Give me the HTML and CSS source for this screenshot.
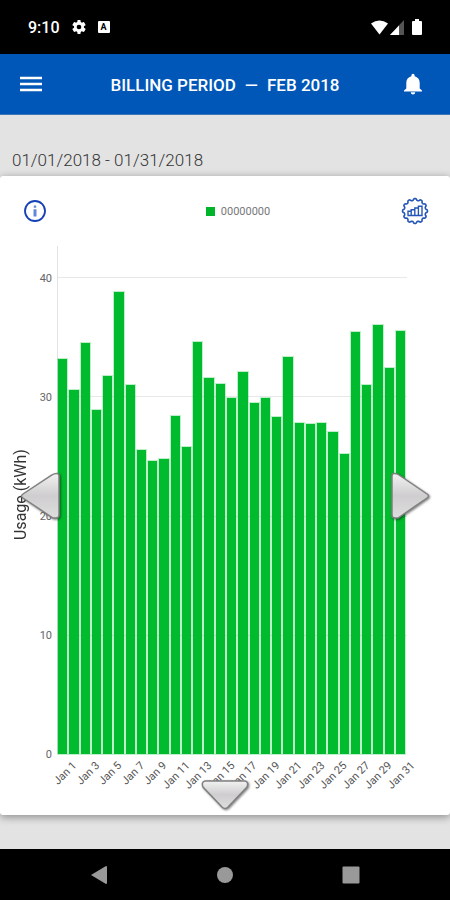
FILE: index.html
```
<!DOCTYPE html>
<html lang="en">
<head>
  <meta charset="UTF-8">
  <meta name="viewport" content="width=device-width, initial-scale=1">
  <title>Billing Period</title>
  <link rel="stylesheet" href="styles.css">
</head>
<body>

  <div class="status-bar">
    <span class="time">9:10</span>
    <svg width="16" height="16" viewBox="0 0 24 24"><path fill="#fff" d="M19.4 13a7.500 7.500 0 0 0 0-2l2.300-1.700a.5.5 0 0 0 .1-.7l-2.200-3.800a.5.5 0 0 0-.6-.2l-2.700 1a8 8 0 0 0-1.700-1L14.200 1.800a.5.5 0 0 0-.5-.4h-3.400a.5.5 0 0 0-.5.400L9.400 4.600a8 8 0 0 0-1.700 1l-2.700-1a.5.5 0 0 0-.6.2L2.200 8.600a.5.500 0 0 0 .1.700L4.600 11a7.500 7.500 0 0 0 0 2l-2.300 1.700a.5.5 0 0 0-.1.700l2.200 3.800c.1.200.4.300.6.200l2.700-1a8 8 0 0 0 1.700 1l.4 2.800c0 .2.2.4.5.4h3.400c.3 0 .5-.2.5-.4l.4-2.800a8 8 0 0 0 1.700-1l2.700 1c.2.1.5 0 .6-.2l2.200-3.800a.5.5 0 0 0-.1-.7zM12 15.500a3.500 3.500 0 1 1 0-7 3.500 3.500 0 0 1 0 7z"/></svg>
    <span class="badge">A</span>
    <div class="signals">
      <svg width="17" height="15" viewBox="0 0 17 15"><path fill="#fff" d="M8.500 14.500 0 3.500Q8.500-2.500 17 3.500z"/></svg>
      <svg width="14" height="15" viewBox="0 0 14 15"><path fill="#555" d="M14 0v15H0z"/><path fill="#fff" d="M9 5.400V15H0z"/></svg>
      <svg class="battery" width="10" height="16" viewBox="0 0 10 16"><path fill="#fff" d="M3 0h4v2h2q1 0 1 1v12q0 1-1 1H1q-1 0-1-1V3q0-1 1-1h2z"/></svg>
    </div>
  </div>

  <header class="header">
    <button type="button" aria-label="Menu">
      <svg width="22" height="16" viewBox="0 0 22 16"><path stroke="#fff" stroke-width="2.400" d="M0 2h22M0 8h22M0 14h22"/></svg>
    </button>
    <h1><span>BILLING PERIOD</span> <span>—</span> <span>FEB 2018</span></h1>
    <button type="button" aria-label="Notifications">
      <svg width="18" height="22" viewBox="0 0 18 22"><path fill="#fff" d="M9 21.500a2.200 2.200 0 0 0 2.200-2.200H6.800A2.200 2.200 0 0 0 9 21.500zM15.700 15.500V10c0-3.600-1.900-6-5.100-6.800V2.300a1.600 1.600 0 0 0-3.200 0v.9C4.200 4 2.300 6.400 2.300 10v5.500L0 17.500v1h18v-1z"/></svg>
    </button>
  </header>

  <p class="period">01/01/2018 - 01/31/2018</p>

  <main class="card">
    <div class="card-head">
      <button type="button" aria-label="Information">
        <svg width="24" height="24" viewBox="0 0 24 24"><circle cx="12" cy="12" r="10" fill="none" stroke="#1541b5" stroke-width="1.800"/><path fill="#6287d8" d="M10.800 6.500h2.400v2.200h-2.400zM10.500 10.300h3v7.200h-3z"/></svg>
      </button>
      <div class="legend"><i></i>00000000</div>
      <button type="button" aria-label="Chart settings">
        <svg width="28" height="28" viewBox="0 0 28 28" fill="none" stroke="#2456b8">
          <path id="cog" stroke-width="1.600" stroke-linejoin="round"/>
          <path stroke-width="1.400" d="M6.500 18.500H21V9.200h-3.600v9.300M17.400 11h-3.600v7.500M13.800 12.700h-3.600v5.800M10.200 14.200H7v4.300"/>
        </svg>
      </button>
    </div>

    <div class="chart">
      <div class="axis-title">Usage (kWh)</div>
      <div class="y-axis">
        <div class="rest"></div>
        <div class="step"><span>40</span></div>
        <div class="step"><span>30</span></div>
        <div class="step"><span>20</span></div>
        <div class="step"><span>10</span></div>
        <div class="zero"><span>0</span></div>
      </div>
      <div class="plot">
        <div class="lines">
          <div class="rest"></div>
          <div class="step"></div>
          <div class="step"></div>
          <div class="step"></div>
          <div class="step"></div>
        </div>
        <div class="bars" id="bars"></div>
      </div>
      <div class="x-axis" id="x-axis"></div>
    </div>

    <button type="button" class="arrow left" aria-label="Previous period">
      <svg width="44" height="50" viewBox="0 0 44 50"><path d="M38 2.500Q40 2.500 40 5v39q0 3-3 3h-3L4 27q-3-2 0-4L33 4Q35 2.500 38 2.500z"/></svg>
    </button>
    <button type="button" class="arrow right" aria-label="Next period">
      <svg width="44" height="50" viewBox="0 0 44 50"><path d="M6 2.500Q4 2.500 4 5v39q0 3 3 3h3l29-20q3-2 0-4L11 4Q9 2.500 6 2.500z"/></svg>
    </button>
    <button type="button" class="arrow down" aria-label="Show details">
      <svg width="50" height="32" viewBox="0 0 50 32"><path d="M5 2h40q4 1 2 6L28 28q-3 3-6 0L3 8Q1 3 5 2z"/></svg>
    </button>
  </main>

  <nav class="nav-bar">
    <button type="button" aria-label="Back"><svg width="18" height="20" viewBox="0 0 18 20"><path d="M16 1q1 0 1 1v16q0 1-1 1L1 10z"/></svg></button>
    <button type="button" aria-label="Home"><svg width="18" height="18" viewBox="0 0 18 18"><circle cx="9" cy="9" r="8"/></svg></button>
    <button type="button" aria-label="Recents"><svg width="18" height="18" viewBox="0 0 18 18"><rect x="0.500" y="0.500" width="17" height="17" rx="1"/></svg></button>
  </nav>

  <svg width="0" height="0" class="defs">
    <linearGradient id="silver" x1="0" y1="0" x2="0" y2="1">
      <stop offset="0" stop-color="#f2f2f2"/>
      <stop offset="0.500" stop-color="#cfcdcf"/>
      <stop offset="1" stop-color="#dedede"/>
    </linearGradient>
  </svg>

  <script>
    const max = 42.65;
    const usage = [
      33.2, 30.6, 34.5, 28.9, 31.7, 38.8, 31.0, 25.5, 24.6, 24.8, 28.4,
      25.8, 34.6, 31.6, 31.1, 29.9, 32.1, 29.5, 29.9, 28.3, 33.3, 27.8,
      27.7, 27.8, 27.0, 25.2, 35.4, 31.0, 36.0, 32.4, 35.5
    ];

    document.getElementById("bars").innerHTML = usage
      .map((v) => `<div class="bar" style="height:${(v / max) * 100}%"></div>`)
      .join("");

    // one label for every second day
    document.getElementById("x-axis").innerHTML = usage
      .map((v, i) => `<div>${i % 2 === 0 ? `<span>Jan ${i + 1}</span>` : ""}</div>`)
      .join("");

    // scalloped outline of the settings icon
    let d = "";
    for (let i = 0; i <= 120; i++) {
      const a = (i / 120) * Math.PI * 2;
      const r = 11.6 + 0.9 * Math.tanh(2 * Math.cos(a * 12));
      d += (i ? "L" : "M") + (14 + r * Math.cos(a)).toFixed(2) + " " + (14 + r * Math.sin(a)).toFixed(2);
    }
    document.getElementById("cog").setAttribute("d", d + "z");
  </script>

</body>
</html>
```
FILE: styles.css
```
* {
  box-sizing: border-box;
}

body {
  font-family: Roboto, 'Noto Sans', sans-serif;
  margin: 0;
  min-height: 100vh;
  display: flex;
  flex-direction: column;
  background-color: #e3e3e3;
  color: #333;
}

button {
  display: flex;
  padding: 0;
  border: none;
  background: none;
  cursor: pointer;
}

svg {
  display: block;
}

.defs {
  position: absolute;
}

.status-bar {
  display: flex;
  align-items: center;
  gap: 11px;
  height: 54px;
  padding: 0 28px;
  background-color: #000;
  color: #fff;
}

.time {
  font-size: 16px;
  font-weight: 500;
}

.badge {
  width: 12px;
  height: 12px;
  border-radius: 1px;
  background-color: #fff;
  color: #000;
  font-size: 9px;
  font-weight: bold;
  line-height: 12px;
  text-align: center;
}

.signals {
  display: flex;
  align-items: center;
  gap: 2px;
  margin-left: auto;
}

.battery {
  margin-left: 6px;
}

.header {
  display: flex;
  align-items: center;
  justify-content: space-between;
  height: 61px;
  padding: 0 28px 0 20px;
  background-color: #0057b8;
  border-bottom: 1px solid #3b74b8;
}

h1 {
  display: flex;
  gap: 9px;
  margin: 2px 0 0 4px;
  color: #fff;
  font-size: 17px;
  font-weight: 500;
}

.period {
  margin: 0;
  padding: 35px 12px 6px;
  font-size: 17px;
  font-weight: 300;
  line-height: 20px;
}

.card {
  position: relative;
  flex: 1;
  display: flex;
  flex-direction: column;
  margin-bottom: 34px;
  border-radius: 3px;
  background-color: #fff;
  box-shadow: 0 2px 8px rgba(0, 0, 0, 0.4);
}

.card-head {
  display: flex;
  align-items: center;
  justify-content: space-between;
  height: 70px;
  padding: 0 21px 0 23px;
}

.legend {
  display: flex;
  align-items: center;
  gap: 6px;
  margin-left: 28px;
  color: #777;
  font-size: 11px;
}

.legend i {
  width: 9px;
  height: 9px;
  background-color: #00b52a;
}

.chart {
  flex: 1;
  display: grid;
  grid-template-columns: 18px 22px 1fr;
  grid-template-rows: 1fr 61px;
  padding: 0 43px 0 12px;
}

.axis-title {
  padding-top: 10px;
  writing-mode: vertical-rl;
  transform: rotate(180deg);
  font-size: 16px;
  line-height: 18px;
  text-align: center;
}

.y-axis,
.lines {
  display: flex;
  flex-direction: column;
}

.rest {
  flex: 265;
}

.step {
  flex: 1000;
}

.y-axis div {
  color: #666;
  font-size: 11px;
  line-height: 1px;
  text-align: right;
}

.y-axis .zero {
  height: 0;
}

.plot {
  display: grid;
  margin-left: 5px;
  border-left: 1px solid #e2e2e2;
}

.lines,
.bars {
  grid-area: 1 / 1;
}

.lines .step {
  border-top: 1px solid #e8e8e8;
}

.bars {
  display: flex;
  align-items: flex-end;
}

.bar {
  flex: 1;
  margin-right: 2px;
  background-color: #00bb2d;
  box-shadow: 0 0 0 1px rgba(0, 187, 45, 0.25);
}

.x-axis {
  grid-column: 3;
  display: flex;
  padding: 3px 0 0 12px;
  margin-right: -6px;
}

.x-axis div {
  flex: 1;
  width: 0;
  display: flex;
  justify-content: flex-end;
}

.x-axis span {
  align-self: flex-start;
  color: #555;
  font-size: 11px;
  line-height: 14px;
  white-space: nowrap;
  transform: rotate(-45deg);
  transform-origin: right center;
}

.arrow {
  position: absolute;
}

.arrow path {
  fill: url(#silver);
  stroke: #808080;
  stroke-width: 1.5;
}

.arrow svg {
  filter: drop-shadow(1px 1px 1px rgba(0, 0, 0, 0.5));
}

.left {
  top: 50%;
  left: 19px;
  transform: translateY(-50%);
}

.right {
  top: 50%;
  right: 18px;
  transform: translateY(-50%);
}

.down {
  bottom: 4px;
  left: 50%;
  transform: translateX(-50%);
}

.nav-bar {
  display: flex;
  align-items: center;
  justify-content: space-between;
  height: 51px;
  padding: 0 20%;
  background-color: #000;
}

.nav-bar svg {
  fill: #999;
}
```
